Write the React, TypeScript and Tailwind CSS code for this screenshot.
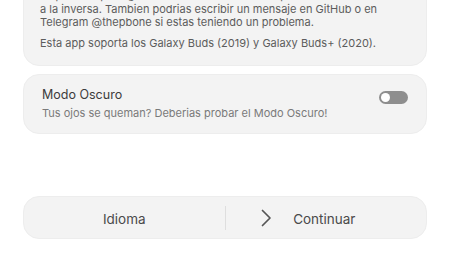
import React from "react";

export default function App() {
  return (
    <div
      className="w-[450px] h-[253px] overflow-hidden bg-white flex flex-col px-[23px]"
      style={{ fontFamily: "Inter, 'Noto Sans', sans-serif" }}
    >
      <div className="-mt-[40px] rounded-[16px] bg-[#f3f3f3] border border-[#ededed] pl-[16px] pr-[16px] pt-[28px] pb-[14px] text-[11px] leading-[13.5px] text-[#5c5c5c]">
        <p>
          Es posible que algunas funciones no esten disponibles en tu modelo o
          <br />
          a la inversa. Tambien podrias escribir un mensaje en GitHub o en
          <br />
          Telegram @thepbone si estas teniendo un problema.
        </p>
        <p className="mt-[7.5px]">
          Esta app soporta los Galaxy Buds (2019) y Galaxy Buds+ (2020).
        </p>
      </div>

      <div className="mt-[8px] h-[60px] rounded-[16px] bg-[#f3f3f3] border border-[#ededed] pl-[18px] pr-[18px] pt-[12px] flex items-start justify-between">
        <div className="flex flex-col">
          <span className="text-[12.5px] leading-[16px] text-[#3c3c3c]">Modo Oscuro</span>
          <span className="text-[11px] leading-[15px] text-[#7a7a7a] mt-[3.5px]">
            Tus ojos se queman? Deberias probar el Modo Oscuro!
          </span>
        </div>
        <div className="mt-[4px] w-[29px] h-[13px] rounded-full bg-[#8e8e8e] flex items-center pl-[2px]">
          <div className="w-[9px] h-[9px] rounded-full bg-white" />
        </div>
      </div>

      <div className="mt-auto mb-[14px] h-[43px] rounded-[16px] bg-[#f3f3f3] border border-[#ededed] flex items-center pt-[4px]">
        <div className="flex-1 flex items-center justify-center text-[13.5px] text-[#4a4a4a]">
          Idioma
        </div>
        <div className="w-px h-[24px] bg-[#dedede] -mt-[4px]" />
        <div className="flex-1 flex items-center justify-center text-[13.5px] text-[#4a4a4a]">
          <div className="flex items-center mr-[35px]">
            <svg width="11" height="18" viewBox="0 0 11 18" fill="none" className="-mt-[4px]">
              <polyline points="1.5,1.5 9,9 1.5,16.5" stroke="#555" strokeWidth="1.7" strokeLinecap="round" strokeLinejoin="round" />
            </svg>
            <span className="ml-[21px]">Continuar</span>
          </div>
        </div>
      </div>
    </div>
  );
}
